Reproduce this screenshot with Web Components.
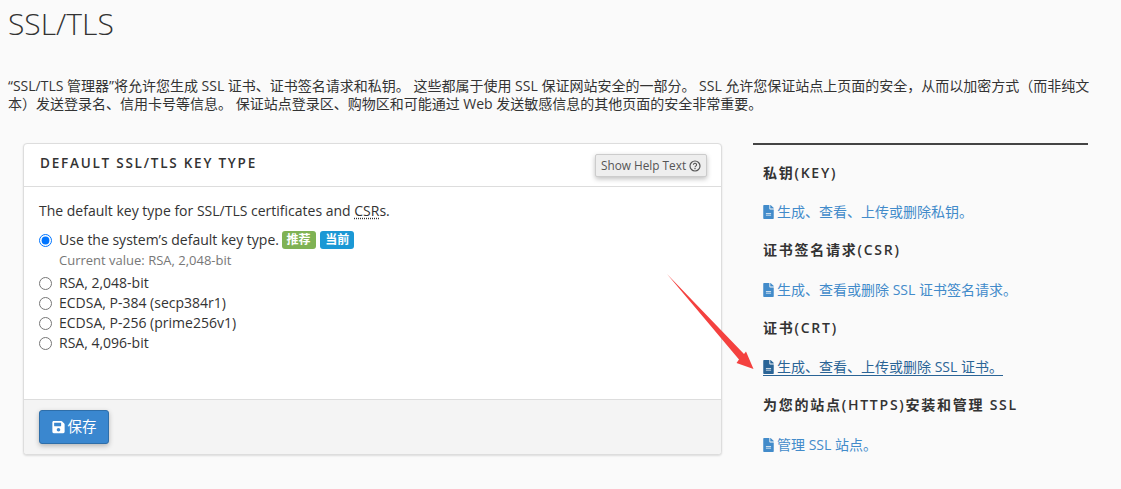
<!DOCTYPE html>
<html lang="zh"><head><meta charset="utf-8"><title>SSL/TLS</title>
<style>
html,body{margin:0;padding:0;background:#fafafa;height:489px;overflow:hidden}
body{font:14px/18px "Open Sans","Noto Sans CJK SC",sans-serif;color:#333;position:relative}
</style></head><body>
<ssl-page></ssl-page>
<red-arrow></red-arrow>
<template id="t-page"><style>
:host{display:block;padding:0 28px 0 8px}
h1{font:300 30px/34px "Open Sans","Noto Sans CJK SC",sans-serif;color:#333;margin:0;padding-top:7px;height:43px}
p{margin:27px 0 0;height:36px;line-height:18px;width:1085px}
.cols{display:grid;grid-template-columns:699px 335px;column-gap:31px;margin:30px 0 0 15px}
</style>
<h1>SSL/TLS</h1>
<p>“SSL/TLS 管理器”将允许您生成 SSL 证书、证书签名请求和私钥。 这些都属于使用 SSL 保证网站安全的一部分。 SSL 允许您保证站点上页面的安全，从而以加密方式（而非纯文本）发送登录名、信用卡号等信息。 保证站点登录区、购物区和可能通过 Web 发送敏感信息的其他页面的安全非常重要。</p>
<div class="cols">
<key-card></key-card>
<side-nav>
<nav-section title="私钥(KEY)" link="生成、查看、上传或删除私钥。"></nav-section>
<nav-section title="证书签名请求(CSR)" link="生成、查看或删除 SSL 证书签名请求。"></nav-section>
<nav-section title="证书(CRT)" link="生成、查看、上传或删除 SSL 证书。" hover></nav-section>
<nav-section title="为您的站点(HTTPS)安装和管理 SSL" link="管理 SSL 站点。"></nav-section>
</side-nav>
</div></template>

<template id="t-card"><style>
:host{display:block;box-sizing:border-box;height:312px;background:#fff;border:1px solid #ddd;border-radius:4px;box-shadow:0 1px 2px rgba(0,0,0,.12);display:flex;flex-direction:column;overflow:hidden}
header{height:42px;border-bottom:1px solid #ddd;display:flex;justify-content:space-between;align-items:flex-start;padding:0 14px 0 16px;flex:none}
h2{font:600 13.5px/18px "Open Sans","Noto Sans CJK SC",sans-serif;letter-spacing:1.77px;margin:10px 0 0;color:#333}
.help{margin-top:10px;box-sizing:border-box;width:112px;height:23px;border:1px solid #ccc;border-radius:2px;background:#eee;box-shadow:0 2px 5px rgba(0,0,0,.25);font-size:11.8px;line-height:21px;padding:0 0 0 5px;color:#555;display:flex;align-items:center;gap:3px;white-space:nowrap}
.help svg{width:12px;height:12px;flex:none}
.body{flex:1;padding:15px 15px 0}
.intro{margin-bottom:10px}
abbr{text-decoration:underline dotted;text-underline-offset:2px}
.foot{box-sizing:border-box;height:55px;background:#f4f4f4;border-top:1px solid #ddd;padding:10px 15px 0;flex:none}
button{height:34px;width:70px;box-sizing:border-box;background:#3a87cf;border:1px solid #2e6ea9;border-radius:3px;color:#fff;font:14.500px/18px "Open Sans","Noto Sans CJK SC",sans-serif;box-shadow:0 2px 5px rgba(0,0,0,.25);display:flex;align-items:center;justify-content:center;gap:3px;padding:0}
button svg{width:13px;height:14px}
</style>
<header><h2>DEFAULT SSL/TLS KEY TYPE</h2>
<div class="help">Show Help Text <svg viewBox="0 0 12 12"><circle cx="6" cy="6" r="5" fill="none" stroke="#555" stroke-width="1.2"/><path d="M4.400 4.800a1.600 1.500 0 1 1 2.400 1.300c-.6.400-.8.600-.8 1.200" fill="none" stroke="#555" stroke-width="1.1"/><rect x="5.400" y="8" width="1.200" height="1.200" fill="#555"/></svg></div></header>
<div class="body">
<div class="intro">The default key type for SSL/TLS certificates and <abbr>CSR</abbr>s.</div>
<key-option checked>Use the system’s default key type. <tag-label color="#7fb254" style="margin-left:-1px">推荐</tag-label> <tag-label color="#1b98d5" style="margin-left:1px">当前</tag-label><span slot="note">Current value: RSA, 2,048-bit</span></key-option>
<key-option>RSA, 2,048-bit</key-option>
<key-option>ECDSA, P-384 (secp384r1)</key-option>
<key-option>ECDSA, P-256 (prime256v1)</key-option>
<key-option>RSA, 4,096-bit</key-option>
</div>
<div class="foot"><button><svg viewBox="0 0 448 512"><path fill="#fff" d="M433.900 129.900l-83.900-83.900A48 48 0 0 0 316.100 32H48C21.500 32 0 53.500 0 80v352c0 26.500 21.500 48 48 48h352c26.500 0 48-21.500 48-48V163.900a48 48 0 0 0-14.100-34zM224 416c-35.300 0-64-28.700-64-64s28.700-64 64-64 64 28.700 64 64-28.700 64-64 64zm96-304.500V212c0 6.600-5.400 12-12 12H76c-6.600 0-12-5.400-12-12V108c0-6.600 5.400-12 12-12h228.500c3.200 0 6.200 1.300 8.500 3.500l3.500 3.500c2.300 2.300 3.500 5.300 3.500 8.500z"/></svg>保存</button></div>
</template>

<template id="t-opt"><style>
:host{display:block;font-size:14px;line-height:20px}
label{display:flex;align-items:flex-start}
input{margin:4px 7px 0 0;width:13px;height:13px;flex:none}
::slotted([slot=note]){display:block;color:#777;font-size:13px;line-height:20px;margin-bottom:3px}
</style><label><input type="radio" name="kt"><span><slot></slot><slot name="note"></slot></span></label></template>

<template id="t-tag"><style>
:host{display:inline-block;box-sizing:border-box;width:34px;text-align:center;height:18px;line-height:18px;border-radius:3px;color:#fff;font-size:12px;font-weight:700;vertical-align:1px}
</style><slot></slot></template>

<template id="t-side"><style>
:host{display:block;border-top:2px solid #444;padding:0 10px}
</style><slot></slot></template>

<template id="t-sec"><style>
:host{display:block;height:77.5px}
h3{margin:0;padding-top:17.500px;font:600 14px/20px "Open Sans","Noto Sans CJK SC",sans-serif;letter-spacing:1.75px;color:#333}
a{display:inline-flex;align-items:center;gap:3px;margin-top:20.500px;color:#428bca;text-decoration:none;line-height:18px}
a.h{color:#2a6496;border-bottom:1px solid #2a6496;height:17px}
svg{width:11px;height:14px;flex:none}
</style><h3></h3><a href="#"><svg viewBox="0 0 384 512"><path fill="currentColor" d="M224 136V0H24C10.700 0 0 10.700 0 24v464c0 13.300 10.700 24 24 24h336c13.300 0 24-10.700 24-24V160H248c-13.200 0-24-10.800-24-24zm64 236c0 6.600-5.400 12-12 12H108c-6.600 0-12-5.400-12-12v-8c0-6.600 5.400-12 12-12h168c6.600 0 12 5.400 12 12v8zm0-64c0 6.600-5.400 12-12 12H108c-6.600 0-12-5.400-12-12v-8c0-6.600 5.400-12 12-12h168c6.600 0 12 5.400 12 12v8zm96-186v6H256V0h6c6.400 0 12.500 2.500 17 7l98 98c4.500 4.500 7 10.600 7 17z"/></svg><span></span></a></template>

<template id="t-arrow"><style>
:host{position:absolute;left:0;top:0;width:1121px;height:489px;pointer-events:none;display:block}
</style><svg width="1121" height="489"><polygon fill="#f4413f" points="667,274 744,354 746,351.500 753.500,369 736.500,363 739,359.500"/></svg></template>

<script>
const def=(n,t,init)=>customElements.define(n,class extends HTMLElement{
  constructor(){super();this.attachShadow({mode:'open'}).append(document.getElementById(t).content.cloneNode(true))}
  connectedCallback(){init&&init.call(this,this.shadowRoot)}
});
def('ssl-page','t-page');
def('key-card','t-card');
def('key-option','t-opt',function(s){if(this.hasAttribute('checked'))s.querySelector('input').checked=true;});
def('tag-label','t-tag',function(){this.style.background=this.getAttribute('color')});
def('side-nav','t-side');
def('nav-section','t-sec',function(s){
  s.querySelector('h3').textContent=this.getAttribute('title');
  s.querySelector('span').textContent=this.getAttribute('link');
  if(this.hasAttribute('hover'))s.querySelector('a').classList.add('h');
});
def('red-arrow','t-arrow');
</script>
</body></html>
